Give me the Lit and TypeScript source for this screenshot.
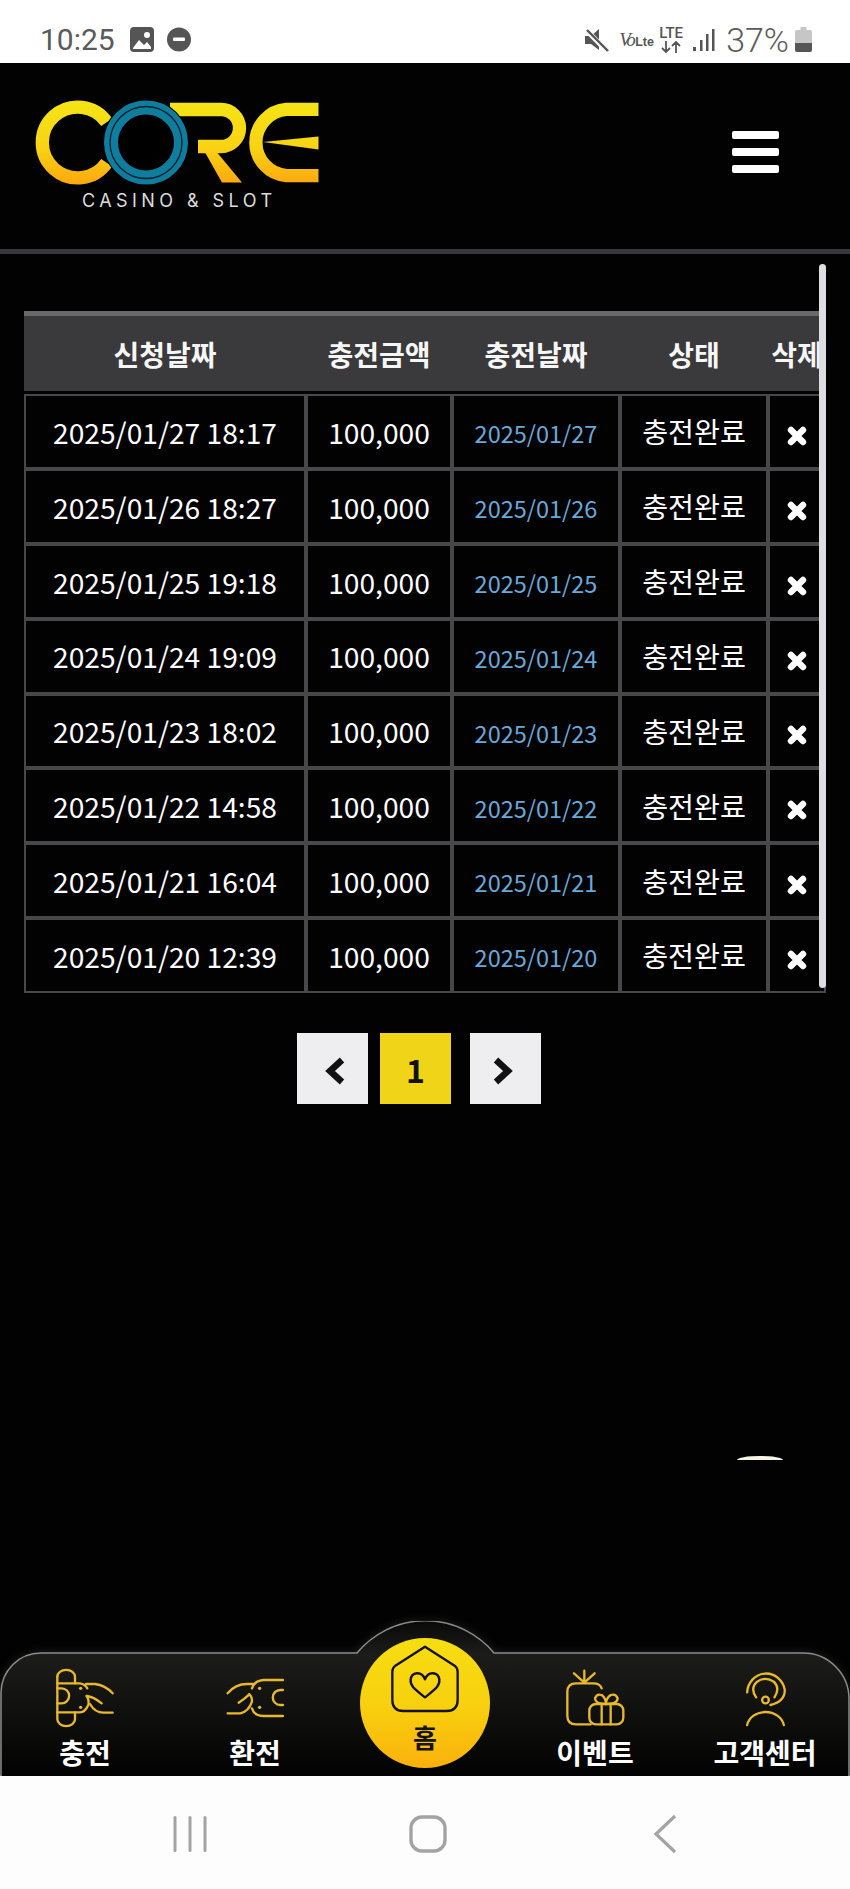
import { LitElement, html, css, svg } from "lit";
import { customElement } from "lit/decorators.js";

const rows = [
  ["2025/01/27 18:17", "2025/01/27"],
  ["2025/01/26 18:27", "2025/01/26"],
  ["2025/01/25 19:18", "2025/01/25"],
  ["2025/01/24 19:09", "2025/01/24"],
  ["2025/01/23 18:02", "2025/01/23"],
  ["2025/01/22 14:58", "2025/01/22"],
  ["2025/01/21 16:04", "2025/01/21"],
  ["2025/01/20 12:39", "2025/01/20"],
];

const zoomG = (tx: number, ty: number, body: unknown) =>
  svg`<g transform="translate(${tx},${ty}) scale(.3333)" fill="none" stroke="#e9b92c" stroke-width="7" stroke-linecap="round" stroke-linejoin="round">${body}</g>`;

@customElement("app-root")
export class AppRoot extends LitElement {
  static styles = css`
    :host {
      display: flex;
      flex-direction: column;
      width: 100%;
      min-height: 100vh;
      background: #020203;
      font-family: "Noto Sans CJK KR", "Noto Sans", sans-serif;
      color: #fff;
    }
    .status {
      height: 63px;
      flex: none;
      background: #fff;
      display: flex;
      align-items: center;
      padding: 16px 38px 0 40px;
      color: #5a5a5a;
      font-family: Roboto, sans-serif;
      box-sizing: border-box;
    }
    .time { font-size: 30px; line-height: 30px; margin-right: 15px; }
    .status svg { display: block; flex: none; }
    .ml13 { margin-left: 13px; }
    .spacer { flex: 1; }
    .volte { display: flex; align-items: baseline; margin-left: 10px; color: #555; width: 33px; white-space: nowrap; }
    .vo { font: italic 19px "Liberation Serif", serif; letter-spacing: -2.5px; margin-right: 2px; }
    .lte-sm { font: bold 12.5px "Liberation Sans", sans-serif; }
    .lte { margin-left: 6px; width: 26px; display: flex; flex-direction: column; align-items: center; color: #555; }
    .lte span { font: 500 15px/13px Roboto, sans-serif; margin-bottom: 1px; }
    .signal { margin-left: 9px; }
    .pct { font-size: 34px; line-height: 34px; margin-left: 11px; font-weight: 300; }
    .battery { margin-left: 6px; }

    .header {
      flex: none;
      height: 191px;
      box-sizing: border-box;
      border-bottom: 5px solid #39383d;
      display: flex;
      justify-content: space-between;
      align-items: flex-start;
      padding: 32px 71px 0 30px;
    }
    .logo { display: block; }
    .burger { display: flex; flex-direction: column; gap: 9px; width: 47px; margin-top: 36px; }
    .burger i { display: block; height: 8px; border-radius: 2px; background: #fff; }

    .content { flex: 1; position: relative; padding: 57px 24px 0; }
    .table { width: 802px; overflow: hidden; }
    .thead, .tbody {
      display: grid;
      grid-template-columns: 278px 142px 164px 144px 54px;
      column-gap: 4px;
      padding: 0 2px;
    }
    .thead {
      background: #3a393b;
      border-top: 5px solid #68676a;
      height: 75px;
      font-size: 28px;
      font-weight: 700;
      margin-bottom: 3px;
      color: #f6f6f6;
    }
    .th { display: flex; align-items: center; justify-content: center; white-space: nowrap; }
    .tbody { background: #48484a; row-gap: 4px; padding: 2px; }
    .td {
      height: 70.875px;
      background: #020203;
      display: flex;
      align-items: center;
      justify-content: center;
      font-size: 28.2px;
      line-height: 1;
      white-space: nowrap;
      padding-top: 1px;
      box-sizing: border-box;
    }
    .blue { color: #6aa8da; font-size: 23.5px; padding-top: 5px; }
    .status-cell { padding-top: 0; }
    .x { display: block; margin-top: 8px; }
    .scroll {
      position: absolute;
      left: 819px;
      top: 10px;
      width: 7px;
      height: 724px;
      border-radius: 4px;
      background: #dedde2;
    }
    .pager { display: flex; margin: 40px 0 0 273px; }
    .pg {
      width: 71px;
      height: 71px;
      background: #eeedf0;
      display: flex;
      align-items: center;
      justify-content: center;
      color: #111;
      font-size: 32px;
      font-weight: 700;
    }
    .pg.on { background: #f0d418; margin: 0 19px 0 12px; }
    .pg svg { display: block; }
    .glint {
      position: absolute;
      left: 737px;
      top: 1202px;
      width: 46px;
      height: 4px;
      border-radius: 50% 50% 0 0 / 100% 100% 0 0;
      background: #f6f4e2;
    }

    .nav {
      position: relative;
      flex: none;
      height: 122px;
      display: grid;
      grid-template-columns: repeat(5, 170px);
    }
    .nav-bg { position: absolute; left: 0; top: -32px; display: block; filter: drop-shadow(0 0 5px rgba(255,255,255,.12)); }
    .item { position: relative; display: flex; flex-direction: column; align-items: center; padding-top: 15px; font-size: 28px; font-weight: 700; line-height: 40px; }
    .item svg { display: block; height: 60px; }
    .item span { margin-top: 4px; white-space: nowrap; }
    .home {
      position: relative;
      justify-self: center;
      width: 130px;
      height: 130px;
      margin-top: -15px;
      border-radius: 50%;
      background: linear-gradient(180deg, #f6de12 0%, #f8cf0e 55%, #fbb00c 100%);
      display: flex;
      flex-direction: column;
      align-items: center;
      padding-top: 6px;
      box-sizing: border-box;
      color: #151208;
      font-size: 26px;
      font-weight: 700;
      line-height: 30px;
    }
    .home svg { display: block; }
    .home span { margin-top: 6px; }

    .sys {
      flex: none;
      height: 114px;
      box-sizing: border-box;
      background: #fdfdfd;
      border-top: 1px solid #8d8d8d;
      display: flex;
      justify-content: center;
      gap: 198px;
      padding: 38px 0 0 5px;
    }
    .sys svg { display: block; }
  `;

  private logo() {
    return html`<svg class="logo" width="300" height="120" viewBox="30 95 300 120">
      <defs>
        <linearGradient id="lg" gradientUnits="userSpaceOnUse" x1="0" y1="100" x2="0" y2="184">
          <stop offset="0" stop-color="#f4e516" />
          <stop offset=".55" stop-color="#f8d414" />
          <stop offset="1" stop-color="#fda90e" />
        </linearGradient>
      </defs>
      <g fill="none" stroke="url(#lg)" stroke-width="13.3">
        <path d="M106.7 122.2 A35.4 35.4 0 1 0 106.7 162.8" />
        <path d="M170 109.5 H221 A18.5 18.5 0 0 1 221 146.5 H198" />
        <path d="M318.5 109.4 H286.5 A33.2 33.2 0 0 0 286.5 175.6 H318.5" />
      </g>
      <path d="M198 140 L222 182.5 H242 L215 150 Z" fill="url(#lg)" />
      <path d="M263 142 L318.5 136.5 V149.5 Z" fill="url(#lg)" />
      <circle cx="146" cy="142.5" r="43" fill="#000" />
      <circle cx="146" cy="142.5" r="35" fill="none" stroke="#0f7d9e" stroke-width="14" />
      <circle cx="146" cy="142.5" r="36" fill="none" stroke="#04202a" stroke-width="1.3" />
      <text x="82" y="207" fill="#dcdcdc" font-family="Inter, 'Liberation Sans', sans-serif" font-size="18" textLength="190">CASINO &amp; SLOT</text>
    </svg>`;
  }

  private chargeIcon() {
    return html`<svg width="80" height="60" viewBox="0 0 80 60">${zoomG(5, -8, svg`
      <path d="M22 50 a26 20 0 0 1 53 0 V70" />
      <path d="M22 50 V178 a26 20 0 0 0 53 0 V157" />
      <path d="M22 70 H90 Q105 72 112 85" />
      <path d="M22 157 H90 Q105 157 115 135 Q118 120 110 108" />
      <path d="M22 85 H35 a22 22 0 0 1 0 45 H22" />
      <path d="M108 72 H135 Q165 75 188 100" />
      <path d="M110 108 Q130 110 155 130" />
      <path d="M120 132 Q135 158 160 158 H188" />
      <circle cx="92" cy="85" r="5" fill="#e9b92c" stroke="none" />
      <circle cx="92" cy="142" r="5" fill="#e9b92c" stroke="none" />
    `)}</svg>`;
  }

  private exchangeIcon() {
    return html`<svg width="80" height="60" viewBox="0 0 80 60">${zoomG(-164.7, -8, svg`
      <path d="M698 60 H640 Q612 62 605 85" />
      <path d="M698 168 H640 Q612 168 605 145" />
      <path d="M532 100 Q555 72 590 72 H612" />
      <path d="M532 160 H570 Q595 155 605 125 Q606 110 597 103" />
      <path d="M565 128 Q585 115 597 103" />
      <path d="M698 90 H690 a22 22 0 0 0 0 45 H698" />
      <circle cx="628" cy="85" r="5" fill="#e9b92c" stroke="none" />
      <circle cx="628" cy="142" r="5" fill="#e9b92c" stroke="none" />
    `)}</svg>`;
  }

  private giftIcon() {
    return html`<svg width="80" height="60" viewBox="0 0 80 60">${zoomG(-5, -8, svg`
      <path d="M155 85 Q150 70 130 70 H78 Q52 70 52 96 V167 Q52 193 78 193 H122" />
      <rect x="118" y="132" width="102" height="61" rx="20" />
      <path d="M155 132 V193 M182 132 V193" />
      <path d="M168 132 Q135 132 135 115 Q140 100 155 105 Q168 115 168 132" />
      <path d="M168 132 Q203 132 203 115 Q198 100 182 105 Q168 115 168 132" />
      <path d="M103 68 V32 M103 68 L72 40 M103 68 L134 40" />
    `)}</svg>`;
  }

  private supportIcon() {
    return html`<svg width="80" height="60" viewBox="0 0 80 60">${zoomG(-174.5, -8, svg`
      <path d="M590 97 A57 60 0 0 1 703 90 Q703 125 660 135" />
      <path d="M617 112 Q598 85 620 65 Q645 48 670 65 Q690 85 672 112" />
      <circle cx="645" cy="120" r="10" />
      <path d="M590 195 A56 48 0 0 1 700 195" />
    `)}</svg>`;
  }

  render() {
    return html`
      <div class="status">
        <span class="time">10:25</span>
        <svg width="24" height="25" viewBox="0 0 24 25">
          <rect width="24" height="25" rx="4" fill="#555" />
          <circle cx="17" cy="8" r="3" fill="#fff" />
          <path d="M3 21 L9 13 L14 18 L17 15 L21 20 V22 H3 Z" fill="#fff" />
        </svg>
        <svg class="ml13" width="24" height="25" viewBox="0 0 24 25">
          <circle cx="12" cy="12.5" r="12" fill="#555" />
          <rect x="6" y="10.5" width="12" height="3.6" rx="1" fill="#fff" />
        </svg>
        <div class="spacer"></div>
        <svg width="24" height="24" viewBox="0 0 24 24">
          <path d="M0 8 H6 L14 1 V22 L6 16 H0 Z" fill="#555" />
          <path d="M1 2 L23 24" stroke="#fff" stroke-width="5" />
          <path d="M2 2 L23 23" stroke="#555" stroke-width="2.4" />
        </svg>
        <div class="volte"><span class="vo">Vo</span><span class="lte-sm">Lte</span></div>
        <div class="lte">
          <span>LTE</span>
          <svg width="20" height="12" viewBox="0 0 20 12" fill="none" stroke="#555" stroke-width="1.8">
            <path d="M5 0 V11 M1 7 L5 11 L9 7 M15 12 V1 M11 5 L15 1 L19 5" />
          </svg>
        </div>
        <svg class="signal" width="22" height="24" viewBox="0 0 22 24" fill="#555">
          <rect x="0" y="19" width="3" height="4" />
          <rect x="7" y="12" width="2.5" height="11" />
          <rect x="13" y="6" width="2.5" height="17" />
          <rect x="19" y="1" width="2.5" height="22" />
        </svg>
        <span class="pct">37%</span>
        <svg class="battery" width="17" height="25" viewBox="0 0 17 25">
          <path d="M5.5 0 H11.5 V3 H15 Q17 3 17 5 V23 Q17 25 15 25 H2 Q0 25 0 23 V5 Q0 3 2 3 H5.5 Z" fill="#c6c6c6" />
          <path d="M0 16 H17 V23 Q17 25 15 25 H2 Q0 25 0 23 Z" fill="#555" />
        </svg>
      </div>

      <div class="header">
        ${this.logo()}
        <div class="burger"><i></i><i></i><i></i></div>
      </div>

      <div class="content">
        <div class="table">
          <div class="thead">
            <div class="th">신청날짜</div>
            <div class="th">충전금액</div>
            <div class="th">충전날짜</div>
            <div class="th">상태</div>
            <div class="th">삭제</div>
          </div>
          <div class="tbody">
            ${rows.map(
              ([a, b]) => html`
                <div class="td">${a}</div>
                <div class="td">100,000</div>
                <div class="td blue">${b}</div>
                <div class="td status-cell">충전완료</div>
                <div class="td">
                  <svg class="x" width="20" height="20" viewBox="0 0 20 20" stroke="#fff" stroke-width="6.4" stroke-linecap="round">
                    <path d="M4 4 L16 16 M16 4 L4 16" />
                  </svg>
                </div>
              `
            )}
          </div>
        </div>
        <div class="scroll"></div>
        <div class="pager">
          <div class="pg">
            <svg width="71" height="71" viewBox="0 0 71 71" fill="none" stroke="#111" stroke-width="6.5">
              <path d="M45 27 L33 38 L45 49" />
            </svg>
          </div>
          <div class="pg on">1</div>
          <div class="pg">
            <svg width="71" height="71" viewBox="0 0 71 71" fill="none" stroke="#111" stroke-width="6.5">
              <path d="M26 27 L38 38 L26 49" />
            </svg>
          </div>
        </div>
        <div class="glint"></div>
      </div>

      <div class="nav">
        <svg class="nav-bg" width="850" height="155" viewBox="0 0 850 155">
          <defs>
            <linearGradient id="nb" gradientUnits="userSpaceOnUse" x1="0" y1="0" x2="0" y2="154">
              <stop offset="0" stop-color="#090909" />
              <stop offset=".22" stop-color="#1c1c1a" />
              <stop offset="1" stop-color="#020202" />
            </linearGradient>
          </defs>
          <path
            d="M1 156 V72 A40 40 0 0 1 41 32 H357 A89 89 0 0 1 494 32 H803 A46 46 0 0 1 849 78 V156"
            fill="url(#nb)"
            stroke="#8c8c8c"
            stroke-width="1.5"
          />
        </svg>
        <div class="item">${this.chargeIcon()}<span>충전</span></div>
        <div class="item">${this.exchangeIcon()}<span>환전</span></div>
        <div class="home">
          <svg width="80" height="72" viewBox="0 0 80 72">
            <g transform="translate(-45,-44) scale(.3333)" fill="none" stroke="#14110a" stroke-width="7" stroke-linejoin="round">
              <path d="M255 140 L166 197 Q157 204 157 216 V300 Q157 333 190 333 H320 Q353 333 353 300 V216 Q353 204 344 197 Z" />
              <path d="M255 292 C225 268 210 258 212 240 C214 215 245 212 255 238 C265 212 296 215 298 240 C300 258 285 268 255 292 Z" />
            </g>
          </svg>
          <span>홈</span>
        </div>
        <div class="item">${this.giftIcon()}<span>이벤트</span></div>
        <div class="item">${this.supportIcon()}<span>고객센터</span></div>
      </div>

      <div class="sys">
        <svg width="40" height="40" viewBox="0 0 40 40" fill="#a3a3a3">
          <rect x="3.5" y="2" width="3" height="36" rx="1.5" />
          <rect x="18.5" y="2" width="3" height="36" rx="1.5" />
          <rect x="33.5" y="2" width="3" height="36" rx="1.5" />
        </svg>
        <svg width="40" height="40" viewBox="0 0 40 40">
          <rect x="3" y="3" width="34" height="34" rx="11" fill="none" stroke="#a3a3a3" stroke-width="3.4" />
        </svg>
        <svg width="40" height="40" viewBox="0 0 40 40" fill="none" stroke="#a3a3a3" stroke-width="3.2">
          <path d="M29 2 L10 20 L29 38" />
        </svg>
      </div>
    `;
  }
}
